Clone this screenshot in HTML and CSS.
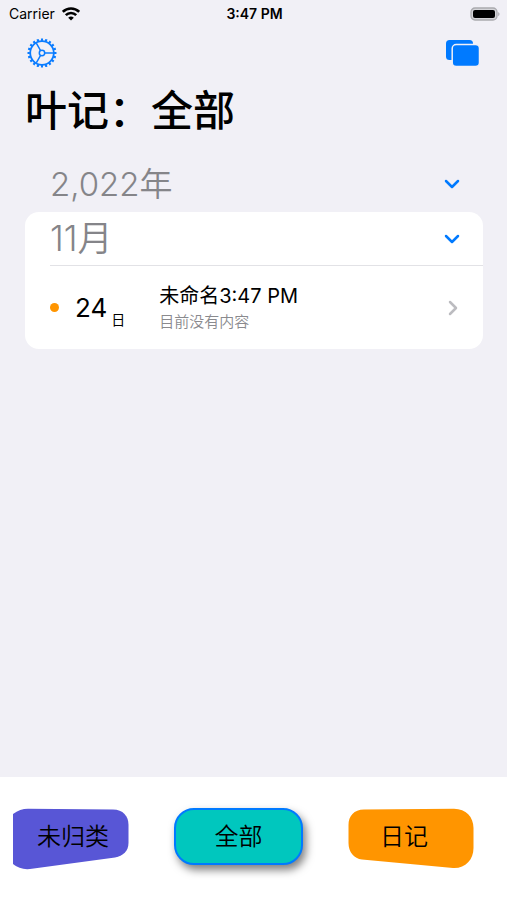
FILE: index.html
```
<!DOCTYPE html>
<html lang="zh-CN">
<head>
  <meta charset="UTF-8" />
  <meta name="viewport" content="width=device-width, initial-scale=1.0"/>
  <title>叶记</title>
  <link rel="stylesheet" href="styles.css">
</head>
<body>
  <div class="status-bar">
    <div class="carrier">
      <span>Carrier</span>
      <svg width="18" height="14" viewBox="0 0 18 14" fill="none" stroke="#000" stroke-width="2.6">
        <path d="M.8 4.800a11.800 11.800 0 0 1 16.400 0"/>
        <path d="M3.800 8.200a7.400 7.400 0 0 1 10.400 0"/>
        <path d="M9 13.600L6.200 10.800a4 4 0 0 1 5.600 0z" fill="#000" stroke="none"/>
      </svg>
    </div>
    <span class="time">3:47 PM</span>
    <div class="battery">
      <svg width="30" height="14" viewBox="0 0 30 14">
        <rect x="1" y="1" width="26" height="12" rx="4" fill="#d4d4d8" stroke="#aaaaae" stroke-width="1.3"/>
        <rect x="3" y="3" width="22" height="8" rx="2" fill="#000"/>
        <path d="M28.2 5v4.200c1.800-.8 1.800-3.400 0-4.200z" fill="#aaaaae"/>
      </svg>
    </div>
  </div>

  <header>
    <nav class="toolbar">
      <button class="icon-button" aria-label="设置">
        <svg width="30" height="30" viewBox="0 0 30 30" fill="none" stroke="#0a7cff">
          <circle cx="15" cy="15" r="13.300" stroke-width="2.400" pathLength="40" stroke-dasharray="1 1" stroke-dashoffset=".5"/>
          <circle cx="15" cy="15" r="11.800" stroke-width="1.800"/>
          <circle cx="15" cy="15" r="2.700" stroke-width="1.500"/>
          <path d="M17.700 15H26M13.600 12.600L9.300 5.200M13.600 17.400L9.300 24.800" stroke-width="1.500"/>
        </svg>
      </button>
      <button class="icon-button" aria-label="分类">
        <svg width="34" height="28" viewBox="0 0 34 28" fill="#007aff">
          <rect x="0" y="1" width="27" height="20" rx="3.500"/>
          <rect x="6.200" y="5.500" width="27.300" height="22" rx="4" stroke="#f1f0f6" stroke-width="1.500"/>
        </svg>
      </button>
    </nav>
    <h1>叶记：全部</h1>
  </header>

  <main>
    <div class="section-header">
      <h2>2,022年</h2>
      <button class="icon-button" aria-label="折叠年份">
        <svg width="16" height="10" viewBox="0 0 16 10" class="chevron"><path d="M2 2l6 6 6-6"/></svg>
      </button>
    </div>
    <div class="card">
      <div class="month-header">
        <h2>11月</h2>
        <button class="icon-button" aria-label="折叠月份">
          <svg width="16" height="10" viewBox="0 0 16 10" class="chevron"><path d="M2 2l6 6 6-6"/></svg>
        </button>
      </div>
      <a class="entry" href="#">
        <span class="dot"></span>
        <span class="day">24</span>
        <span class="day-unit">日</span>
        <span class="entry-text">
          <span class="entry-title">未命名3:47 PM</span>
          <span class="entry-preview">目前没有内容</span>
        </span>
        <svg width="10" height="16" viewBox="0 0 10 16" class="chevron gray"><path d="M2 2l6 6-6 6"/></svg>
      </a>
    </div>
  </main>

  <footer class="tabs">
    <button class="tab tab-left">
      <svg class="tab-shape" viewBox="0 0 116 62" preserveAspectRatio="none">
        <path fill="#5856d6" d="M0 6Q7 .7 15 .700L100 1.500C110 1.700 115.500 8 115.500 17V35C115.500 43 110 48 102 49.500L17 61Q7 62 0 56Z"/>
      </svg>
      <span>未归类</span>
    </button>
    <button class="tab tab-active"><span>全部</span></button>
    <button class="tab tab-right">
      <svg class="tab-shape" viewBox="0 0 126 62" preserveAspectRatio="none">
        <path fill="#ff9500" d="M.500 17C.500 8 6 1.500 16 1.500L106 .700C118 .700 125.500 9 125.500 20V40C125.500 52 117 60.700 105 60L14 51.500C6 50.700 .500 44 .500 35Z"/>
      </svg>
      <span>日记</span>
    </button>
  </footer>
</body>
</html>
```

FILE: styles.css
```
* {
  box-sizing: border-box;
}
body {
  margin: 0;
  min-height: 100vh;
  display: flex;
  flex-direction: column;
  font-family: Inter, "Noto Sans CJK SC", sans-serif;
  background: #f1f0f6;
  color: #000;
}
h1, h2 {
  margin: 0;
}
svg {
  display: block;
}
button {
  padding: 0;
  border: none;
  background: none;
  font-family: inherit;
  color: inherit;
  cursor: pointer;
}
.status-bar {
  display: grid;
  grid-template-columns: 1fr auto 1fr;
  align-items: center;
  height: 27px;
  padding: 0 7px 0 9px;
  font-size: 14px;
}
.carrier {
  display: flex;
  align-items: center;
  gap: 7px;
}
.time {
  font-weight: 600;
}
.battery {
  justify-self: end;
}
.toolbar {
  display: flex;
  align-items: center;
  justify-content: space-between;
  height: 51px;
  padding: 0 27px;
}
h1 {
  padding: 0 25px;
  font-size: 42px;
  line-height: 60px;
  font-weight: 500;
  font-family: "Noto Sans CJK SC", sans-serif;
}
main {
  flex: 1;
  padding: 18px 24px 16px 25px;
}
h2 {
  font-size: 33px;
  line-height: 53px;
  font-weight: 350;
  color: #858589;
}
.section-header, .month-header {
  display: flex;
  align-items: center;
  justify-content: space-between;
  padding-right: 23px;
}
.section-header {
  padding-left: 25px;
  height: 56px;
}
.card {
  background: #fff;
  border-radius: 14px;
}
.month-header {
  margin-left: 25px;
  border-bottom: 1px solid #e2e2e6;
}
.month-header h2 {
  font-size: 35px;
}
.entry {
  display: flex;
  align-items: center;
  height: 83px;
  padding: 0 25px;
  color: #000;
  text-decoration: none;
}
.dot {
  width: 9px;
  height: 9px;
  margin-right: 16px;
  border-radius: 50%;
  background: #ff9500;
}
.day {
  font-size: 26px;
}
.day-unit {
  align-self: flex-end;
  margin: 0 34px 19px 4px;
  font-size: 14px;
  line-height: 20px;
}
.entry-text {
  display: flex;
  flex: 1;
  flex-direction: column;
}
.entry-title {
  font-size: 20px;
  line-height: 28px;
}
.entry-preview {
  font-size: 15px;
  line-height: 24px;
  color: #8a8a8e;
  font-weight: 350;
}
.chevron {
  fill: none;
  stroke: #007aff;
  stroke-width: 2.5;
  stroke-linecap: round;
  stroke-linejoin: round;
}
.chevron.gray {
  stroke: #bcbcc0;
}
.tabs {
  display: flex;
  align-items: flex-start;
  justify-content: space-between;
  height: 123px;
  padding: 31px 33px 0 13px;
  background: #fff;
}
.tab {
  position: relative;
  height: 62px;
  font-size: 24px;
  font-weight: 350;
  line-height: 58px;
}
.tab span {
  position: relative;
  display: block;
}
/* slanted backgrounds of the side tabs */
.tab-shape {
  position: absolute;
  inset: 0;
  width: 100%;
  height: 100%;
}
.tab-left {
  width: 116px;
  padding: 0 0 4px 4px;
}
.tab-active {
  width: 129px;
  height: 57px;
  border: 2px solid #007aff;
  border-radius: 20px;
  background: #00c7be;
  box-shadow: 3px 5px 8px rgba(0, 0, 0, 0.5);
  line-height: 53px;
}
.tab-right {
  width: 126px;
  padding: 0 14px 4px 0;
}
```
